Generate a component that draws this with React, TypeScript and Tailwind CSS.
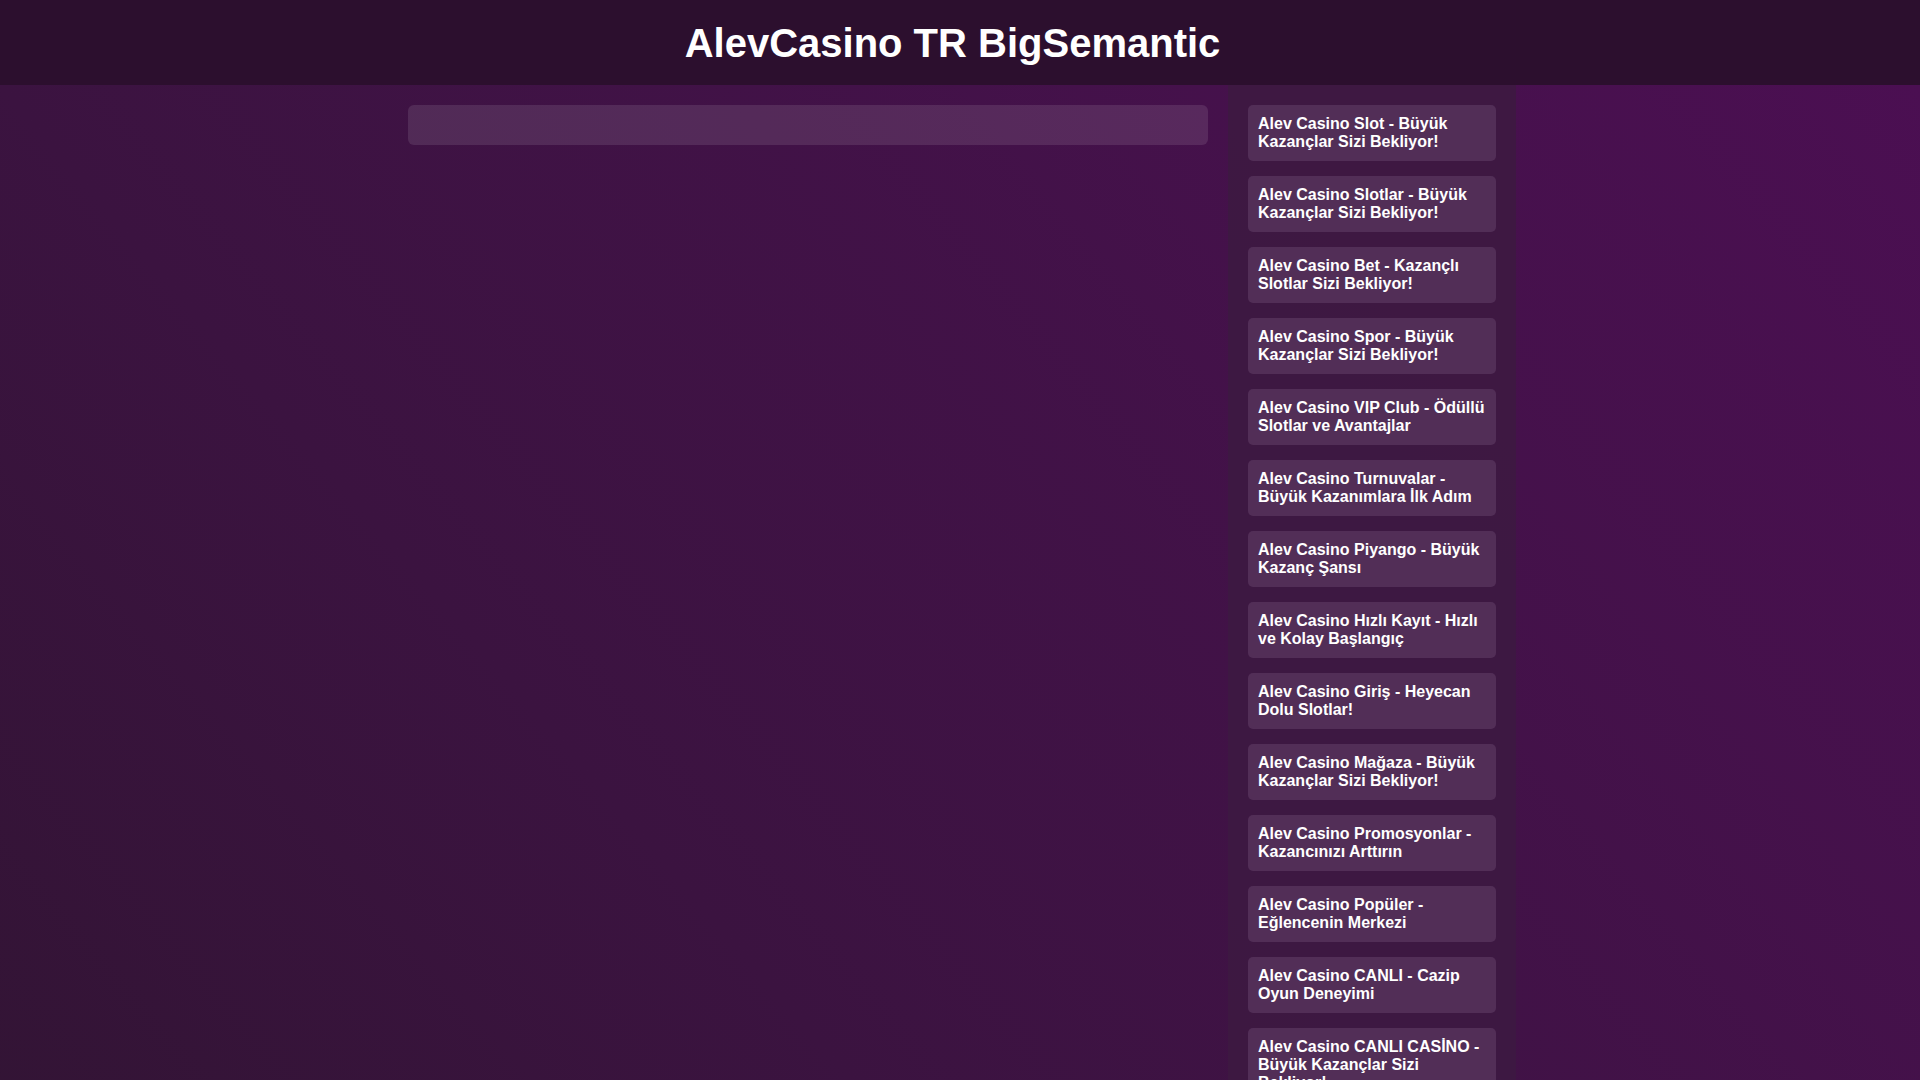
const links: string[] = [
  'Alev Casino Slot - Büyük Kazançlar Sizi Bekliyor!',
  'Alev Casino Slotlar - Büyük Kazançlar Sizi Bekliyor!',
  'Alev Casino Bet - Kazançlı Slotlar Sizi Bekliyor!',
  'Alev Casino Spor - Büyük Kazançlar Sizi Bekliyor!',
  'Alev Casino VIP Club - Ödüllü Slotlar ve Avantajlar',
  'Alev Casino Turnuvalar - Büyük Kazanımlara İlk Adım',
  'Alev Casino Piyango - Büyük Kazanç Şansı',
  'Alev Casino Hızlı Kayıt - Hızlı ve Kolay Başlangıç',
  'Alev Casino Giriş - Heyecan Dolu Slotlar!',
  'Alev Casino Mağaza - Büyük Kazançlar Sizi Bekliyor!',
  'Alev Casino Promosyonlar - Kazancınızı Arttırın',
  'Alev Casino Popüler - Eğlencenin Merkezi',
  'Alev Casino CANLI - Cazip Oyun Deneyimi',
  'Alev Casino CANLI CASİNO - Büyük Kazançlar Sizi Bekliyor!',
  'Alev Casino Bonus - Cömert Hoş Geldin Teklifleri',
  'Alev Casino Mobil - Her Yerde Kesintisiz Oyun',
  'Alev Casino Jackpot - Dev İkramiyeler Sizi Bekliyor!',
  'Alev Casino Rulet - Şansınızı Deneyin',
  'Alev Casino Blackjack - Stratejinizi Konuşturun',
  'Alev Casino Poker - Masada Yerinizi Alın',
  'Alev Casino Baccarat - Klasik Heyecan',
  'Alev Casino Yeni Oyunlar - Her Hafta Yenilik',
  'Alev Casino Para Yatırma - Hızlı ve Güvenli',
  'Alev Casino Para Çekme - Anında Ödeme',
  'Alev Casino Güncel Adres - Kesintisiz Erişim',
  'Alev Casino Destek - 7/24 Canlı Yardım',
  'Alev Casino Freespin - Bedava Dönüşler',
  'Alev Casino Kayıp Bonusu - İkinci Şans',
  'Alev Casino Sadakat - Puan Topla Kazan',
  'Alev Casino Yorumlar - Oyuncu Deneyimleri',
  'Alev Casino Güvenlik - Lisanslı ve Güvenilir',
]

export default function App() {
  return (
    <div className="min-h-screen font-['Liberation_Sans',Arial,sans-serif] text-white">
      <header className="h-[85px] flex items-center justify-center pr-[15px] bg-[#2c0f2e]">
        <h1 className="text-[40px] font-bold">AlevCasino TR BigSemantic</h1>
      </header>

      <div className="w-screen bg-linear-to-tr from-[#291428] via-[#3b1340] to-[#4b0f52] flex justify-center pl-[4px]">
        <div className="w-[1108px] flex items-start gap-[20px]">
          <main className="w-[800px] mt-[20px] h-[40px] rounded-[6px] bg-white/10" />

          <aside className="w-[288px] p-[20px] bg-[#3d1941]/90 flex flex-col gap-[15px]">
            {links.map((title, i) => (
              <a
                key={i}
                href="#"
                className="block px-[10px] py-[10px] rounded-[5px] bg-[#522e57] text-[16px] leading-[18px] font-bold text-white"
              >
                {title}
              </a>
            ))}
          </aside>
        </div>
      </div>
    </div>
  )
}
